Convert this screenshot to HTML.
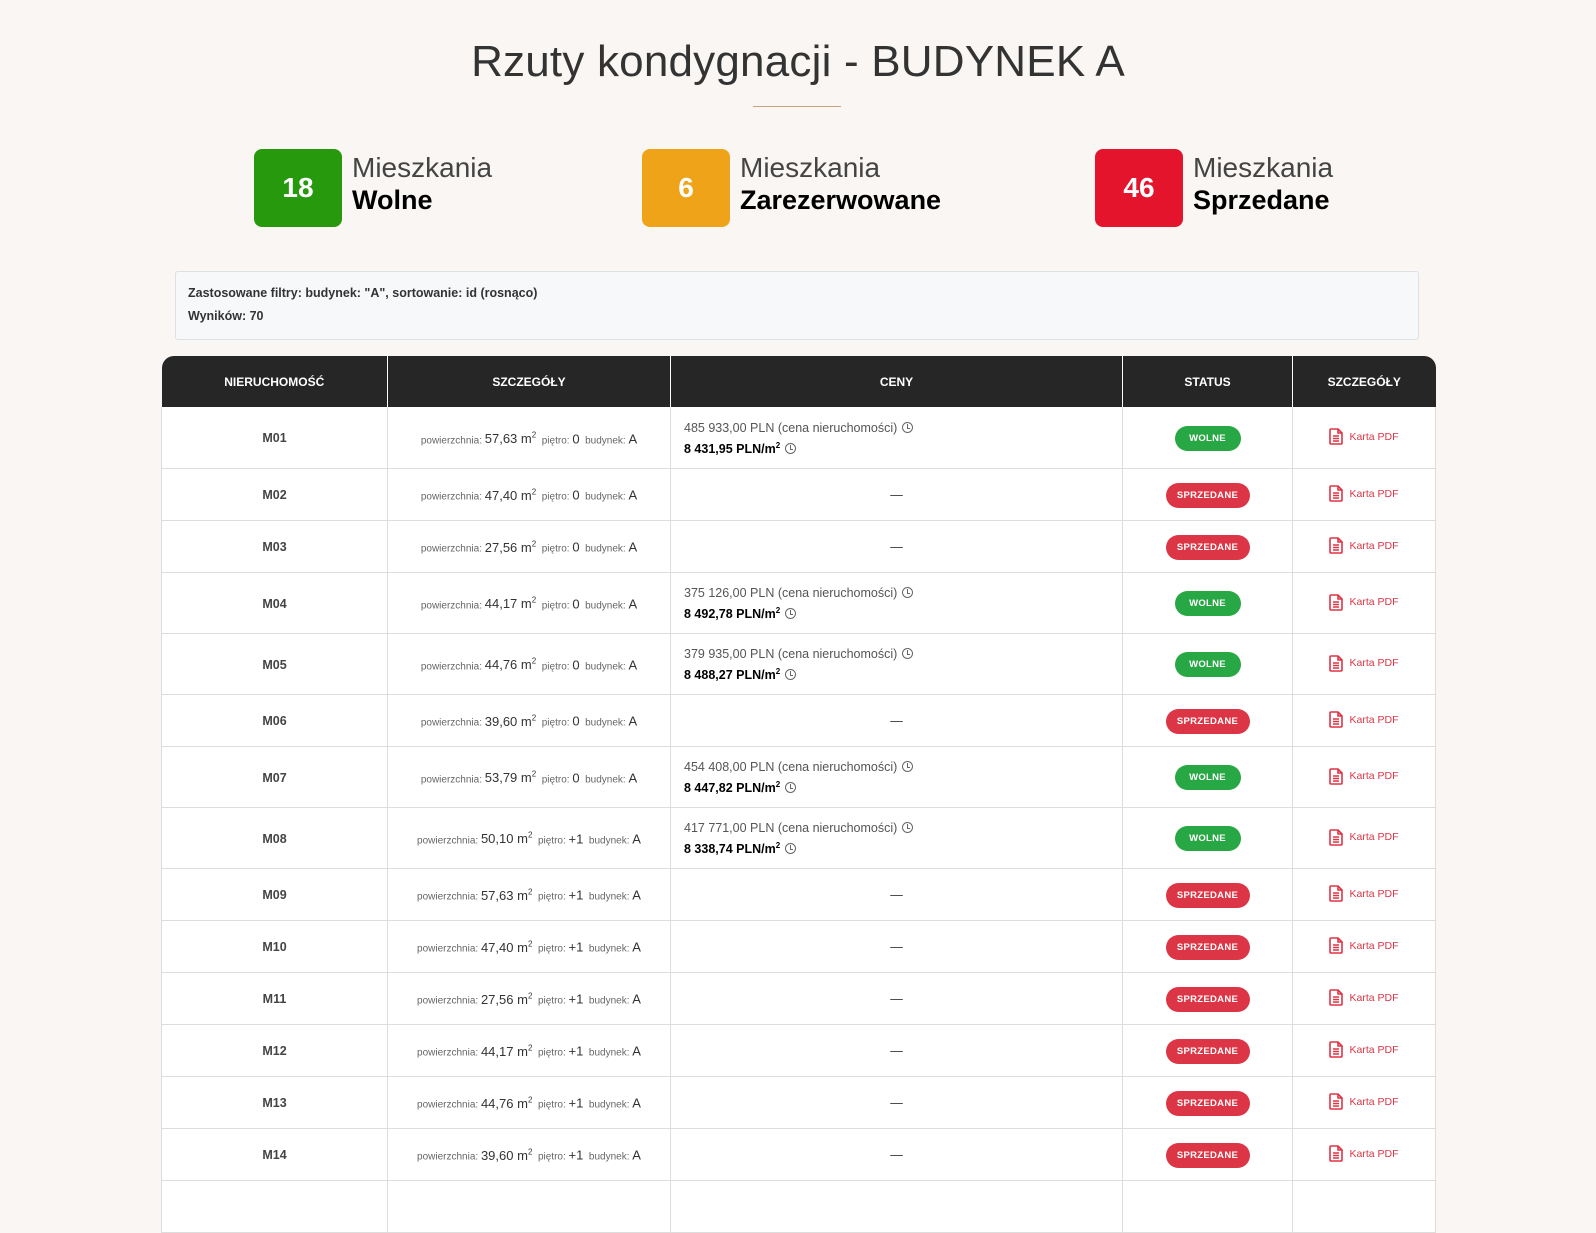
<!DOCTYPE html>
<html><head><meta charset="utf-8">
<style>
*{box-sizing:border-box;margin:0;padding:0}
body{width:1596px;height:1187px;overflow:hidden;background:#f9f6f3;font-family:"Liberation Sans",sans-serif;color:#333;position:relative}
h1{position:absolute;left:0;width:1596px;top:37px;text-align:center;font-weight:300;font-size:44px;color:#333;letter-spacing:0.2px}
.ul{position:absolute;left:753px;top:106px;width:88px;height:1px;background:#c9a27e}
.stat{position:absolute;top:149px;height:78px}
.stat .b{position:absolute;left:0;top:0;width:88px;height:78px;border-radius:8px;color:#fff;font-size:28px;font-weight:bold;display:flex;align-items:center;justify-content:center}
.stat .t{position:absolute;left:98px;top:3px;white-space:nowrap}
.stat .t1{font-size:28px;font-weight:300;color:#444;line-height:32px}
.stat .t2{font-size:27px;font-weight:bold;color:#000;line-height:32px}
.filt{position:absolute;left:175px;top:271px;width:1244px;height:69px;background:#f7f8fa;border:1px solid #dde0e4;border-radius:3px;font-size:12.5px;color:#333;font-weight:bold;padding:14px 12px}
.filt div{height:23px}
table{position:absolute;left:161px;top:356px;width:1274px;border-collapse:collapse;table-layout:fixed;font-size:12.5px}
th{background:#262626;color:#fff;font-size:12px;font-weight:bold;height:51px;border-left:1px solid #fff;text-align:center}
th:first-child{border-left:none;border-top-left-radius:12px}
th:last-child{border-top-right-radius:12px}
td{background:#fff;border:1px solid #ddd;border-top:none;text-align:center;color:#333;padding-top:2px}
td.n{font-weight:bold;font-size:12.5px;color:#444}
.d{font-size:10px;color:#666}
.d b{font-size:13px;color:#333;font-weight:normal}
.d sup{font-size:8px}
td.p{text-align:left;padding-left:13px;font-size:12.5px;color:#555}
td.p .s{color:#000;font-weight:bold;margin-top:6px;display:block}
.ck{display:inline-block;width:11px;height:11px;border:1px solid #666;border-radius:50%;vertical-align:-1px;margin-left:5px;position:relative}
.ck:after{content:"";position:absolute;left:4px;top:1px;width:2px;height:4px;border-left:1px solid #666;border-bottom:1px solid #666}
.bd{display:inline-block;color:#fff;font-size:9.5px;font-weight:bold;border-radius:13px;height:25px;line-height:25px;letter-spacing:0.3px}
.w{background:#28a745;width:66px}
.sp{background:#dc3545;width:84px}
.pdf{color:#dc3545;font-size:10.5px;display:inline-flex;align-items:center;gap:6px}
</style></head><body>
<h1>Rzuty kondygnacji - BUDYNEK A</h1>
<div class="ul"></div>
<div class="stat" style="left:254px"><div class="b" style="background:#269a0c">18</div><div class="t"><div class="t1">Mieszkania</div><div class="t2">Wolne</div></div></div>
<div class="stat" style="left:642px"><div class="b" style="background:#eea319">6</div><div class="t"><div class="t1">Mieszkania</div><div class="t2">Zarezerwowane</div></div></div>
<div class="stat" style="left:1095px"><div class="b" style="background:#e3142b">46</div><div class="t"><div class="t1">Mieszkania</div><div class="t2">Sprzedane</div></div></div>
<div class="filt"><div>Zastosowane filtry: budynek: "A", sortowanie: id (rosnąco)</div><div>Wyników: 70</div></div>
<table>
<colgroup><col style="width:226px"><col style="width:283px"><col style="width:452px"><col style="width:170px"><col style="width:143px"></colgroup>
<tr><th>NIERUCHOMOŚĆ</th><th>SZCZEGÓŁY</th><th>CENY</th><th>STATUS</th><th>SZCZEGÓŁY</th></tr>
<tbody>
<tr style="height:61px"><td class="n">M01</td><td class="d">powierzchnia: <b>57,63 m<sup>2</sup></b>&nbsp; piętro: <b>0</b>&nbsp; budynek: <b>A</b></td><td class="p">485 933,00 PLN (cena nieruchomości)<i class="ck"></i><span class="s">8 431,95 PLN/m<sup style="font-size:8px">2</sup><i class="ck"></i></span></td><td><span class="bd w">WOLNE</span></td><td><span class="pdf"><svg width="14" height="17" viewBox="0 0 14 17"><path d="M2 1h7l4 4v10a1 1 0 0 1-1 1H2a1 1 0 0 1-1-1V2a1 1 0 0 1 1-1zM9 1v4h4M4 8h6M4 10.5h6M4 13h6" fill="none" stroke="#dc3545" stroke-width="1.6"/></svg>Karta PDF</span></td></tr>
<tr style="height:52px"><td class="n">M02</td><td class="d">powierzchnia: <b>47,40 m<sup>2</sup></b>&nbsp; piętro: <b>0</b>&nbsp; budynek: <b>A</b></td><td>—</td><td><span class="bd sp">SPRZEDANE</span></td><td><span class="pdf"><svg width="14" height="17" viewBox="0 0 14 17"><path d="M2 1h7l4 4v10a1 1 0 0 1-1 1H2a1 1 0 0 1-1-1V2a1 1 0 0 1 1-1zM9 1v4h4M4 8h6M4 10.5h6M4 13h6" fill="none" stroke="#dc3545" stroke-width="1.6"/></svg>Karta PDF</span></td></tr>
<tr style="height:52px"><td class="n">M03</td><td class="d">powierzchnia: <b>27,56 m<sup>2</sup></b>&nbsp; piętro: <b>0</b>&nbsp; budynek: <b>A</b></td><td>—</td><td><span class="bd sp">SPRZEDANE</span></td><td><span class="pdf"><svg width="14" height="17" viewBox="0 0 14 17"><path d="M2 1h7l4 4v10a1 1 0 0 1-1 1H2a1 1 0 0 1-1-1V2a1 1 0 0 1 1-1zM9 1v4h4M4 8h6M4 10.5h6M4 13h6" fill="none" stroke="#dc3545" stroke-width="1.6"/></svg>Karta PDF</span></td></tr>
<tr style="height:61px"><td class="n">M04</td><td class="d">powierzchnia: <b>44,17 m<sup>2</sup></b>&nbsp; piętro: <b>0</b>&nbsp; budynek: <b>A</b></td><td class="p">375 126,00 PLN (cena nieruchomości)<i class="ck"></i><span class="s">8 492,78 PLN/m<sup style="font-size:8px">2</sup><i class="ck"></i></span></td><td><span class="bd w">WOLNE</span></td><td><span class="pdf"><svg width="14" height="17" viewBox="0 0 14 17"><path d="M2 1h7l4 4v10a1 1 0 0 1-1 1H2a1 1 0 0 1-1-1V2a1 1 0 0 1 1-1zM9 1v4h4M4 8h6M4 10.5h6M4 13h6" fill="none" stroke="#dc3545" stroke-width="1.6"/></svg>Karta PDF</span></td></tr>
<tr style="height:61px"><td class="n">M05</td><td class="d">powierzchnia: <b>44,76 m<sup>2</sup></b>&nbsp; piętro: <b>0</b>&nbsp; budynek: <b>A</b></td><td class="p">379 935,00 PLN (cena nieruchomości)<i class="ck"></i><span class="s">8 488,27 PLN/m<sup style="font-size:8px">2</sup><i class="ck"></i></span></td><td><span class="bd w">WOLNE</span></td><td><span class="pdf"><svg width="14" height="17" viewBox="0 0 14 17"><path d="M2 1h7l4 4v10a1 1 0 0 1-1 1H2a1 1 0 0 1-1-1V2a1 1 0 0 1 1-1zM9 1v4h4M4 8h6M4 10.5h6M4 13h6" fill="none" stroke="#dc3545" stroke-width="1.6"/></svg>Karta PDF</span></td></tr>
<tr style="height:52px"><td class="n">M06</td><td class="d">powierzchnia: <b>39,60 m<sup>2</sup></b>&nbsp; piętro: <b>0</b>&nbsp; budynek: <b>A</b></td><td>—</td><td><span class="bd sp">SPRZEDANE</span></td><td><span class="pdf"><svg width="14" height="17" viewBox="0 0 14 17"><path d="M2 1h7l4 4v10a1 1 0 0 1-1 1H2a1 1 0 0 1-1-1V2a1 1 0 0 1 1-1zM9 1v4h4M4 8h6M4 10.5h6M4 13h6" fill="none" stroke="#dc3545" stroke-width="1.6"/></svg>Karta PDF</span></td></tr>
<tr style="height:61px"><td class="n">M07</td><td class="d">powierzchnia: <b>53,79 m<sup>2</sup></b>&nbsp; piętro: <b>0</b>&nbsp; budynek: <b>A</b></td><td class="p">454 408,00 PLN (cena nieruchomości)<i class="ck"></i><span class="s">8 447,82 PLN/m<sup style="font-size:8px">2</sup><i class="ck"></i></span></td><td><span class="bd w">WOLNE</span></td><td><span class="pdf"><svg width="14" height="17" viewBox="0 0 14 17"><path d="M2 1h7l4 4v10a1 1 0 0 1-1 1H2a1 1 0 0 1-1-1V2a1 1 0 0 1 1-1zM9 1v4h4M4 8h6M4 10.5h6M4 13h6" fill="none" stroke="#dc3545" stroke-width="1.6"/></svg>Karta PDF</span></td></tr>
<tr style="height:61px"><td class="n">M08</td><td class="d">powierzchnia: <b>50,10 m<sup>2</sup></b>&nbsp; piętro: <b>+1</b>&nbsp; budynek: <b>A</b></td><td class="p">417 771,00 PLN (cena nieruchomości)<i class="ck"></i><span class="s">8 338,74 PLN/m<sup style="font-size:8px">2</sup><i class="ck"></i></span></td><td><span class="bd w">WOLNE</span></td><td><span class="pdf"><svg width="14" height="17" viewBox="0 0 14 17"><path d="M2 1h7l4 4v10a1 1 0 0 1-1 1H2a1 1 0 0 1-1-1V2a1 1 0 0 1 1-1zM9 1v4h4M4 8h6M4 10.5h6M4 13h6" fill="none" stroke="#dc3545" stroke-width="1.6"/></svg>Karta PDF</span></td></tr>
<tr style="height:52px"><td class="n">M09</td><td class="d">powierzchnia: <b>57,63 m<sup>2</sup></b>&nbsp; piętro: <b>+1</b>&nbsp; budynek: <b>A</b></td><td>—</td><td><span class="bd sp">SPRZEDANE</span></td><td><span class="pdf"><svg width="14" height="17" viewBox="0 0 14 17"><path d="M2 1h7l4 4v10a1 1 0 0 1-1 1H2a1 1 0 0 1-1-1V2a1 1 0 0 1 1-1zM9 1v4h4M4 8h6M4 10.5h6M4 13h6" fill="none" stroke="#dc3545" stroke-width="1.6"/></svg>Karta PDF</span></td></tr>
<tr style="height:52px"><td class="n">M10</td><td class="d">powierzchnia: <b>47,40 m<sup>2</sup></b>&nbsp; piętro: <b>+1</b>&nbsp; budynek: <b>A</b></td><td>—</td><td><span class="bd sp">SPRZEDANE</span></td><td><span class="pdf"><svg width="14" height="17" viewBox="0 0 14 17"><path d="M2 1h7l4 4v10a1 1 0 0 1-1 1H2a1 1 0 0 1-1-1V2a1 1 0 0 1 1-1zM9 1v4h4M4 8h6M4 10.5h6M4 13h6" fill="none" stroke="#dc3545" stroke-width="1.6"/></svg>Karta PDF</span></td></tr>
<tr style="height:52px"><td class="n">M11</td><td class="d">powierzchnia: <b>27,56 m<sup>2</sup></b>&nbsp; piętro: <b>+1</b>&nbsp; budynek: <b>A</b></td><td>—</td><td><span class="bd sp">SPRZEDANE</span></td><td><span class="pdf"><svg width="14" height="17" viewBox="0 0 14 17"><path d="M2 1h7l4 4v10a1 1 0 0 1-1 1H2a1 1 0 0 1-1-1V2a1 1 0 0 1 1-1zM9 1v4h4M4 8h6M4 10.5h6M4 13h6" fill="none" stroke="#dc3545" stroke-width="1.6"/></svg>Karta PDF</span></td></tr>
<tr style="height:52px"><td class="n">M12</td><td class="d">powierzchnia: <b>44,17 m<sup>2</sup></b>&nbsp; piętro: <b>+1</b>&nbsp; budynek: <b>A</b></td><td>—</td><td><span class="bd sp">SPRZEDANE</span></td><td><span class="pdf"><svg width="14" height="17" viewBox="0 0 14 17"><path d="M2 1h7l4 4v10a1 1 0 0 1-1 1H2a1 1 0 0 1-1-1V2a1 1 0 0 1 1-1zM9 1v4h4M4 8h6M4 10.5h6M4 13h6" fill="none" stroke="#dc3545" stroke-width="1.6"/></svg>Karta PDF</span></td></tr>
<tr style="height:52px"><td class="n">M13</td><td class="d">powierzchnia: <b>44,76 m<sup>2</sup></b>&nbsp; piętro: <b>+1</b>&nbsp; budynek: <b>A</b></td><td>—</td><td><span class="bd sp">SPRZEDANE</span></td><td><span class="pdf"><svg width="14" height="17" viewBox="0 0 14 17"><path d="M2 1h7l4 4v10a1 1 0 0 1-1 1H2a1 1 0 0 1-1-1V2a1 1 0 0 1 1-1zM9 1v4h4M4 8h6M4 10.5h6M4 13h6" fill="none" stroke="#dc3545" stroke-width="1.6"/></svg>Karta PDF</span></td></tr>
<tr style="height:52px"><td class="n">M14</td><td class="d">powierzchnia: <b>39,60 m<sup>2</sup></b>&nbsp; piętro: <b>+1</b>&nbsp; budynek: <b>A</b></td><td>—</td><td><span class="bd sp">SPRZEDANE</span></td><td><span class="pdf"><svg width="14" height="17" viewBox="0 0 14 17"><path d="M2 1h7l4 4v10a1 1 0 0 1-1 1H2a1 1 0 0 1-1-1V2a1 1 0 0 1 1-1zM9 1v4h4M4 8h6M4 10.5h6M4 13h6" fill="none" stroke="#dc3545" stroke-width="1.6"/></svg>Karta PDF</span></td></tr>
<tr style="height:52px"><td class="n"></td><td></td><td></td><td></td><td></td></tr>
</tbody></table>
</body></html>
